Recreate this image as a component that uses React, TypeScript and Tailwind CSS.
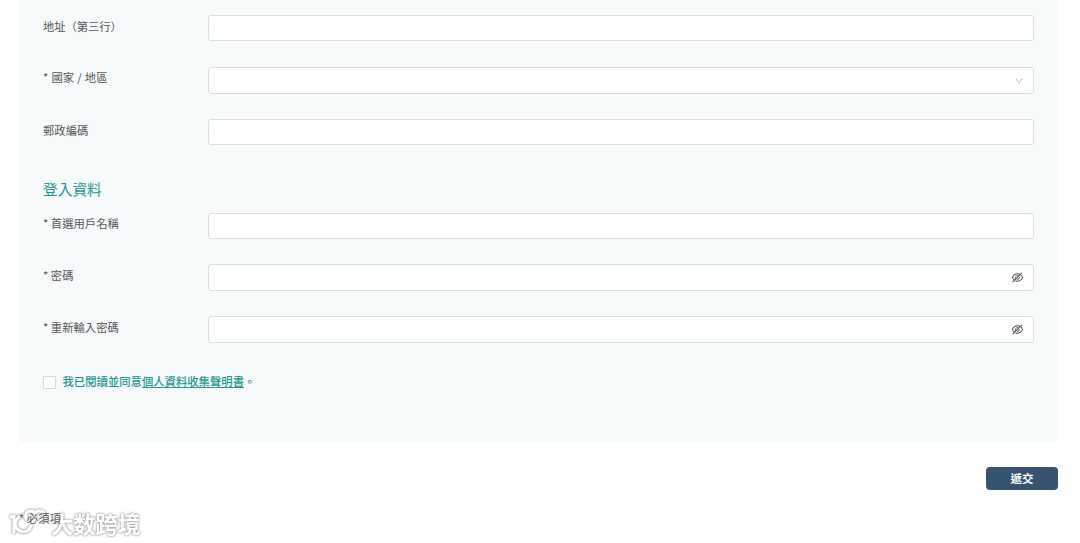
import type { ReactNode } from 'react'
import { AiOutlineDown, AiOutlineEyeInvisible } from 'react-icons/ai'

interface FieldProps {
  id: string
  label: string
  type?: string
  icon?: ReactNode
  className?: string
  labelClassName?: string
}

function Field({ id, label, type = 'text', icon, className = 'h-[26px] mb-[26px]', labelClassName = 'mt-[3px]' }: FieldProps) {
  return (
    <div className={`flex items-start ${className}`}>
      <label htmlFor={id} className={`w-[165px] shrink-0 text-[11.35px] leading-[16px] whitespace-nowrap ${labelClassName}`}>
        {label}
      </label>
      <div className="flex flex-1 items-center h-full bg-white border border-[#dadddd] rounded-[3px] pr-[9px]">
        <input id={id} type={type} className="flex-1 min-w-0 h-full px-2 bg-transparent text-[11px] focus:outline-none" />
        {icon}
      </div>
    </div>
  )
}

export default function App() {
  return (
    <div className="h-[543px] overflow-hidden bg-white px-[19px] text-[#555] [font-family:'Noto_Sans_CJK_TC',sans-serif]">
      <div className="w-[1039px] h-[442px] bg-[#f6fafb] px-[24px] pt-[15px]">
        {/* Address */}
        <Field id="address3" label="地址（第三行）" labelClassName="mt-[3px] tracking-[-0.1px]" />
        <Field
          id="country"
          label="* 國家 / 地區"
          className="h-[27px] mb-[25px]"
          labelClassName="mt-[2px] [word-spacing:0.6px]"
          icon={<AiOutlineDown className="w-[10px] h-[10px] text-[#b5b5b5]" />}
        />
        <Field id="postcode" label="郵政編碼" className="h-[26px] mb-[34px]" />

        {/* Login information */}
        <h2 className="h-[34px] text-[14.7px] leading-[20px] text-[#26978e]">登入資料</h2>
        <Field id="username" label="* 首選用戶名稱" className="h-[26px] mb-[25px]" labelClassName="mt-[2px]" />
        <Field
          id="password"
          label="* 密碼"
          type="password"
          className="h-[27px] mb-[25px]"
          icon={<AiOutlineEyeInvisible className="w-[13px] h-[13px] text-[#444]" />}
        />
        <Field
          id="confirm"
          label="* 重新輸入密碼"
          type="password"
          className="h-[27px]"
          icon={<AiOutlineEyeInvisible className="w-[13px] h-[13px] text-[#444]" />}
        />

        <div className="flex items-start mt-[33px] h-[13px]">
          <input
            id="agree"
            type="checkbox"
            className="appearance-none w-[13px] h-[13px] bg-white border border-[#d9d9d9] rounded-[1px] mr-[6.5px]"
          />
          <label htmlFor="agree" className="-mt-[3px] text-[11.35px] leading-[16px] font-medium text-[#26978e] whitespace-nowrap">
            我已閱讀並同意<a href="#" className="underline">個人資料收集聲明書</a>。
          </label>
        </div>
      </div>

      <div className="flex justify-end w-[1039px] pt-[25px]">
        <button className="w-[72px] h-[23px] pb-[2px] rounded-[4px] bg-[#36546f] text-white text-[11.5px] leading-[16px] font-bold">
          遞交
        </button>
      </div>

      <div className="relative mt-[20px]">
        {/* Watermark behind the footnote */}
        <div className="absolute left-[-11px] top-[-2px] flex items-center text-white [filter:drop-shadow(0_0_1px_#999)_drop-shadow(0_0_1px_#ccc)]">
          <svg width="42" height="30" viewBox="0 0 42 30" fill="none" stroke="currentColor" strokeWidth="3" strokeLinecap="round" strokeLinejoin="round">
            <path d="M3 9 L6 8 V24" />
            <path d="M17 8 A8 8 0 1 0 23 18" />
            <path d="M18 11 V7 Q18 3 22.5 3 Q27 3 27 7 V9 M27 7 Q27 3 31.5 3 Q37 3 37 8 Q37 12 33 12" />
          </svg>
          <span className="ml-[1px] text-[22.3px] leading-[30px] font-bold whitespace-nowrap [font-family:'Noto_Sans_CJK_SC',sans-serif]">
            大数跨境
          </span>
        </div>
        <p className="relative text-[11.35px] leading-[16px]">* 必須項</p>
      </div>
    </div>
  )
}
